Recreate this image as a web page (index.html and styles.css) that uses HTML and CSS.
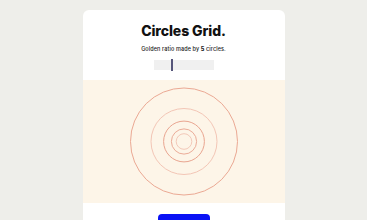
FILE: index.html
```html
<!DOCTYPE html>
<html lang="en">
<head>
    <meta charset="UTF-8">
    <meta name="viewport" content="width=device-width, initial-scale=1.0">
    <title>Circles Grid</title>
    <link rel="stylesheet" href="styles.css">
</head>
<body>
    <div class="card">
        <div class="card-head">
            <h1>Circles Grid.</h1>
            <p class="lead">Golden ratio made by <b>5</b> circles.</p>
            <input class="slider" type="range" min="1" max="14" value="5">
        </div>
        <div class="canvas">
            <svg width="202" height="123" viewBox="0 0 202 123">
                <circle cx="101" cy="61.5" r="53.5" stroke="#eba994" />
                <circle cx="101" cy="61.5" r="33" stroke="#f3c6b6" />
                <circle cx="101" cy="61.5" r="20.4" stroke="#e9a590" />
                <circle cx="101" cy="61.5" r="12.6" stroke="#ebac98" />
                <circle cx="101" cy="61.5" r="7.8" stroke="#f3c9b9" />
            </svg>
        </div>
        <div class="card-foot">
            <button class="btn" aria-label="Randomize"></button>
        </div>
    </div>
</body>
</html>
```

FILE: styles.css
```css
body {
    font-family: Inter, "Noto Sans", sans-serif;
    margin: 0;
    padding: 10px 0 0;
    background-color: #eeeeea;
    color: #111;
}
.card {
    width: 202px;
    margin: 0 auto;
    background: white;
    border-radius: 6px;
    overflow: hidden;
}
.card-head {
    display: flex;
    flex-direction: column;
    align-items: center;
    padding: 11px 0 10px;
}
.card-head h1 {
    margin: 0;
    font-size: 14px;
    line-height: 20px;
    font-weight: 800;
    letter-spacing: -0.1px;
}
.lead {
    margin: 4px 0 0;
    font-size: 5.5px;
    line-height: 8px;
    font-weight: 500;
    letter-spacing: 0.1px;
    color: #222;
}
.lead b {
    font-weight: 800;
}
.slider {
    -webkit-appearance: none;
    appearance: none;
    width: 60px;
    height: 10px;
    margin: 7px 0 0;
    background: #f0f0f0;
    outline: none;
}
.slider::-webkit-slider-thumb {
    -webkit-appearance: none;
    appearance: none;
    width: 2px;
    height: 12px;
    background: #55557a;
}
.canvas {
    height: 123px;
    background: #fdf5e8;
    display: flex;
    align-items: center;
    justify-content: center;
}
.canvas circle {
    fill: none;
    stroke-width: 1;
}
.card-foot {
    display: flex;
    justify-content: center;
    padding: 11px 0 20px;
}
.btn {
    width: 52px;
    height: 20px;
    border: none;
    border-radius: 4px;
    background: #0a12f5;
    padding: 0;
}
```
